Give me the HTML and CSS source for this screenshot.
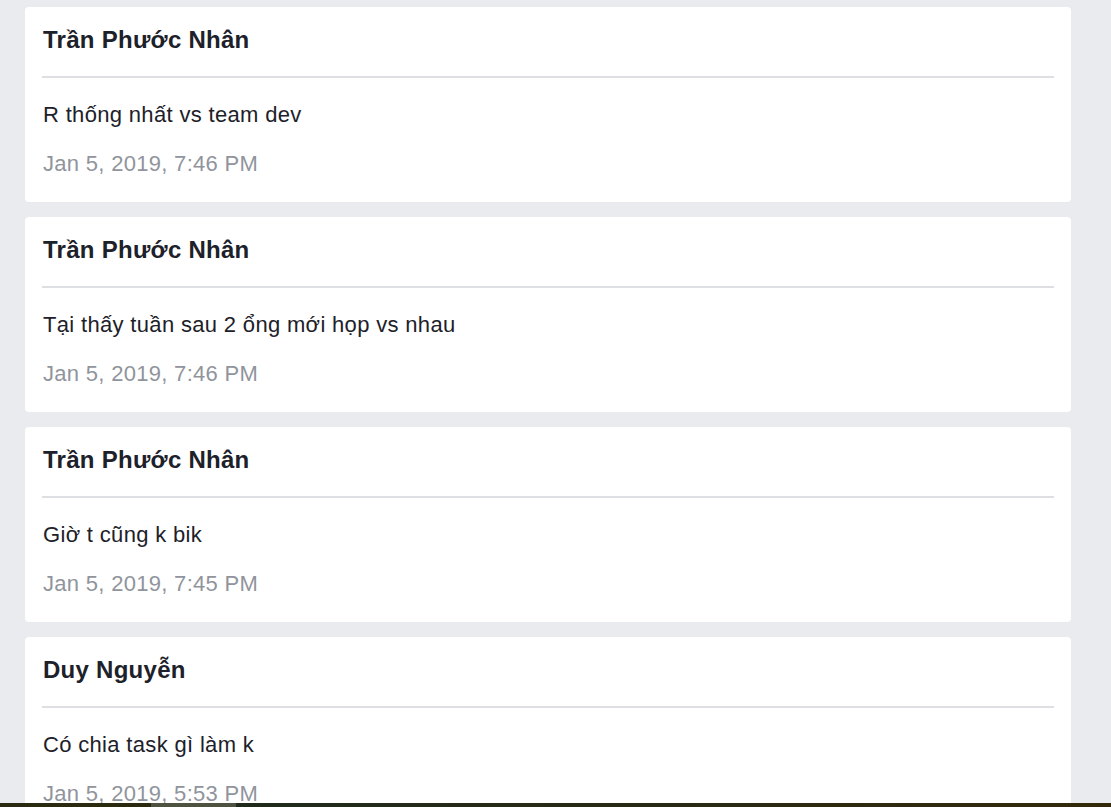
FILE: index.html
```html
<!DOCTYPE html>
<html lang="vi">
<head>
<meta charset="utf-8">
<link rel="stylesheet" href="styles.css">
</head>
<body>
<main class="feed">
  <article class="card">
    <h2 class="author">Trần Phước Nhân</h2>
    <p class="message">R thống nhất vs team dev</p>
    <p class="time">Jan 5, 2019, 7:46 PM</p>
  </article>
  <article class="card">
    <h2 class="author">Trần Phước Nhân</h2>
    <p class="message">Tại thấy tuần sau 2 ổng mới họp vs nhau</p>
    <p class="time">Jan 5, 2019, 7:46 PM</p>
  </article>
  <article class="card">
    <h2 class="author">Trần Phước Nhân</h2>
    <p class="message">Giờ t cũng k bik</p>
    <p class="time">Jan 5, 2019, 7:45 PM</p>
  </article>
  <article class="card">
    <h2 class="author">Duy Nguyễn</h2>
    <p class="message">Có chia task gì làm k</p>
    <p class="time">Jan 5, 2019, 5:53 PM</p>
  </article>
</main>
<div class="strip"><span class="seg seg-a"></span><span class="seg seg-b"></span><span class="seg seg-c"></span></div>
</body>
</html>
```

FILE: styles.css
```css
html, body {
  margin: 0;
  padding: 0;
  background: #e9ebee;
  font-family: "Liberation Sans", Arial, sans-serif;
  overflow: hidden;
  height: 807px;
}
.feed {
  display: flex;
  flex-direction: column;
  gap: 15px;
  padding: 7px 40px 0 25px;
}
.card {
  background: #fff;
  border-radius: 4px;
  padding: 0 17px;
  height: 195px;
  box-sizing: border-box;
  flex-shrink: 0;
}
.author {
  margin: 0;
  padding: 19px 1px 0;
  height: 50px;
  font-size: 24px;
  line-height: 28px;
  font-weight: bold;
  letter-spacing: 0.27px;
  color: #1d2129;
  border-bottom: 2px solid #dddfe2;
}
.message {
  margin: 0;
  padding: 23px 1px 0;
  font-size: 22px;
  line-height: 28px;
  letter-spacing: 0.33px;
  color: #1d2129;
}
.time {
  margin: 0;
  padding: 21px 1px 0;
  font-size: 22px;
  line-height: 28px;
  letter-spacing: 0.3px;
  color: #90949c;
}
.strip {
  position: fixed;
  left: 0;
  right: 0;
  bottom: 0;
  height: 4px;
  display: flex;
}
.seg-a { width: 151px; background: #2a2a10; }
.seg-b { width: 85px; background: #4d5340; }
.seg-c { flex: 1; background: linear-gradient(90deg, #1f2a1c, #33290a); }
```
